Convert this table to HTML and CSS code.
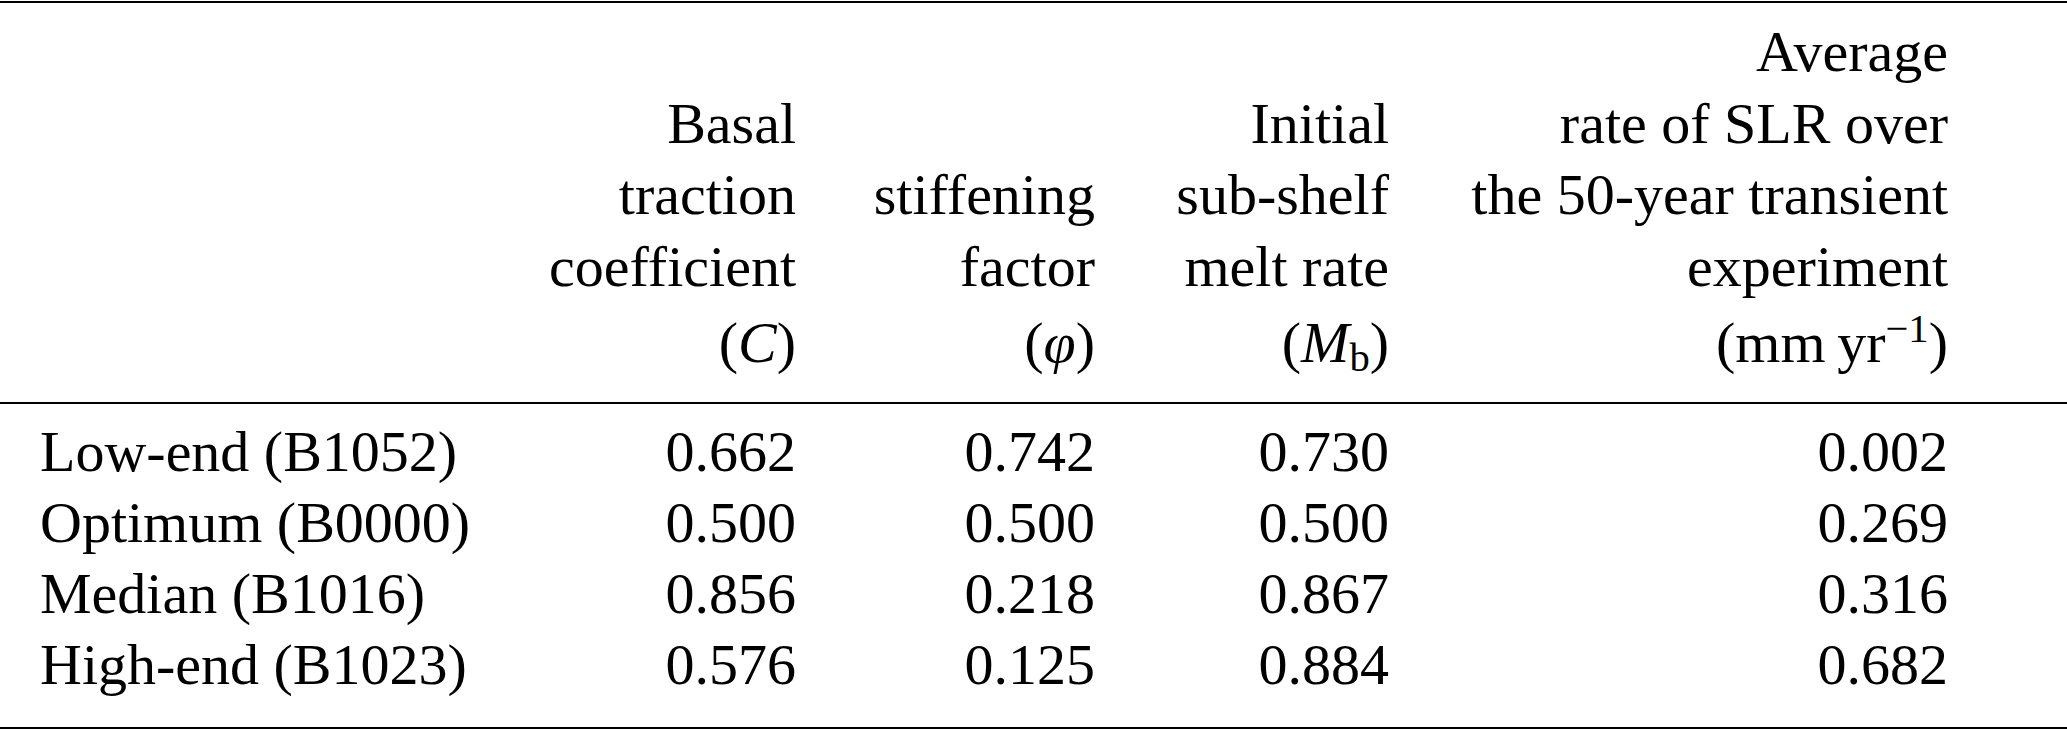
FILE: index.html
```html
<!DOCTYPE html>
<html lang="en">
<head>
<meta charset="utf-8">
<title>Ensemble members</title>
<link rel="stylesheet" href="styles.css">
</head>
<body>
<table class="tbl">
  <colgroup>
    <col class="c-label">
    <col class="c-1">
    <col class="c-2">
    <col class="c-3">
    <col class="c-4">
    <col class="c-pad">
  </colgroup>
  <thead>
    <tr>
      <th class="label"></th>
      <th>Basal<br>traction<br>coefficient<span class="unit">(<i>C</i>)</span></th>
      <th>stiffening<br>factor<span class="unit">(<i>φ</i>)</span></th>
      <th>Initial<br>sub-shelf<br>melt rate<span class="unit">(<i>M</i><sub>b</sub>)</span></th>
      <th>Average<br>rate of SLR over<br>the 50-year transient<br>experiment<span class="unit">(mm&thinsp;yr<sup>−1</sup>)</span></th>
      <th></th>
    </tr>
  </thead>
  <tbody>
    <tr class="first"><td class="label">Low-end (B1052)</td><td>0.662</td><td>0.742</td><td>0.730</td><td>0.002</td><td></td></tr>
    <tr><td class="label">Optimum (B0000)</td><td>0.500</td><td>0.500</td><td>0.500</td><td>0.269</td><td></td></tr>
    <tr><td class="label">Median (B1016)</td><td>0.856</td><td>0.218</td><td>0.867</td><td>0.316</td><td></td></tr>
    <tr class="last"><td class="label">High-end (B1023)</td><td>0.576</td><td>0.125</td><td>0.884</td><td>0.682</td><td></td></tr>
  </tbody>
</table>
</body>
</html>
```
FILE: styles.css
```css
html, body {
  margin: 0;
  padding: 0;
  background: #fff;
}

body {
  color: #000;
  font-family: "Liberation Serif", "Times New Roman", serif;
  font-size: 58px;
}

.tbl {
  width: 100%;
  table-layout: fixed;
  border-collapse: collapse;
  margin-top: 1px;
  border-top: 2px solid #000;
  border-bottom: 2px solid #000;
}

.c-label { width: 510px; }
.c-1 { width: 286px; }
.c-2 { width: 299px; }
.c-3 { width: 294px; }
.c-4 { width: 559px; }

.tbl th,
.tbl td {
  padding: 0;
  text-align: right;
  white-space: nowrap;
}

.tbl th {
  font-weight: normal;
  vertical-align: bottom;
  line-height: 71.6px;
  padding-top: 13px;
  padding-bottom: 23px;
}

.tbl thead tr {
  border-bottom: 2px solid #000;
}

.unit {
  display: block;
  margin-top: 5px;
}

.tbl sup {
  font-size: 0.7em;
  line-height: 0;
  vertical-align: 0.5em;
}

.tbl sub {
  font-size: 0.7em;
  line-height: 0;
  vertical-align: -0.22em;
}

.tbl td {
  line-height: 71px;
  vertical-align: baseline;
}

.tbl td.label,
.tbl th.label {
  text-align: left;
  padding-left: 40px;
}

.tbl tr.first td {
  padding-top: 12px;
}

.tbl tr.last td {
  padding-bottom: 27px;
}
```
